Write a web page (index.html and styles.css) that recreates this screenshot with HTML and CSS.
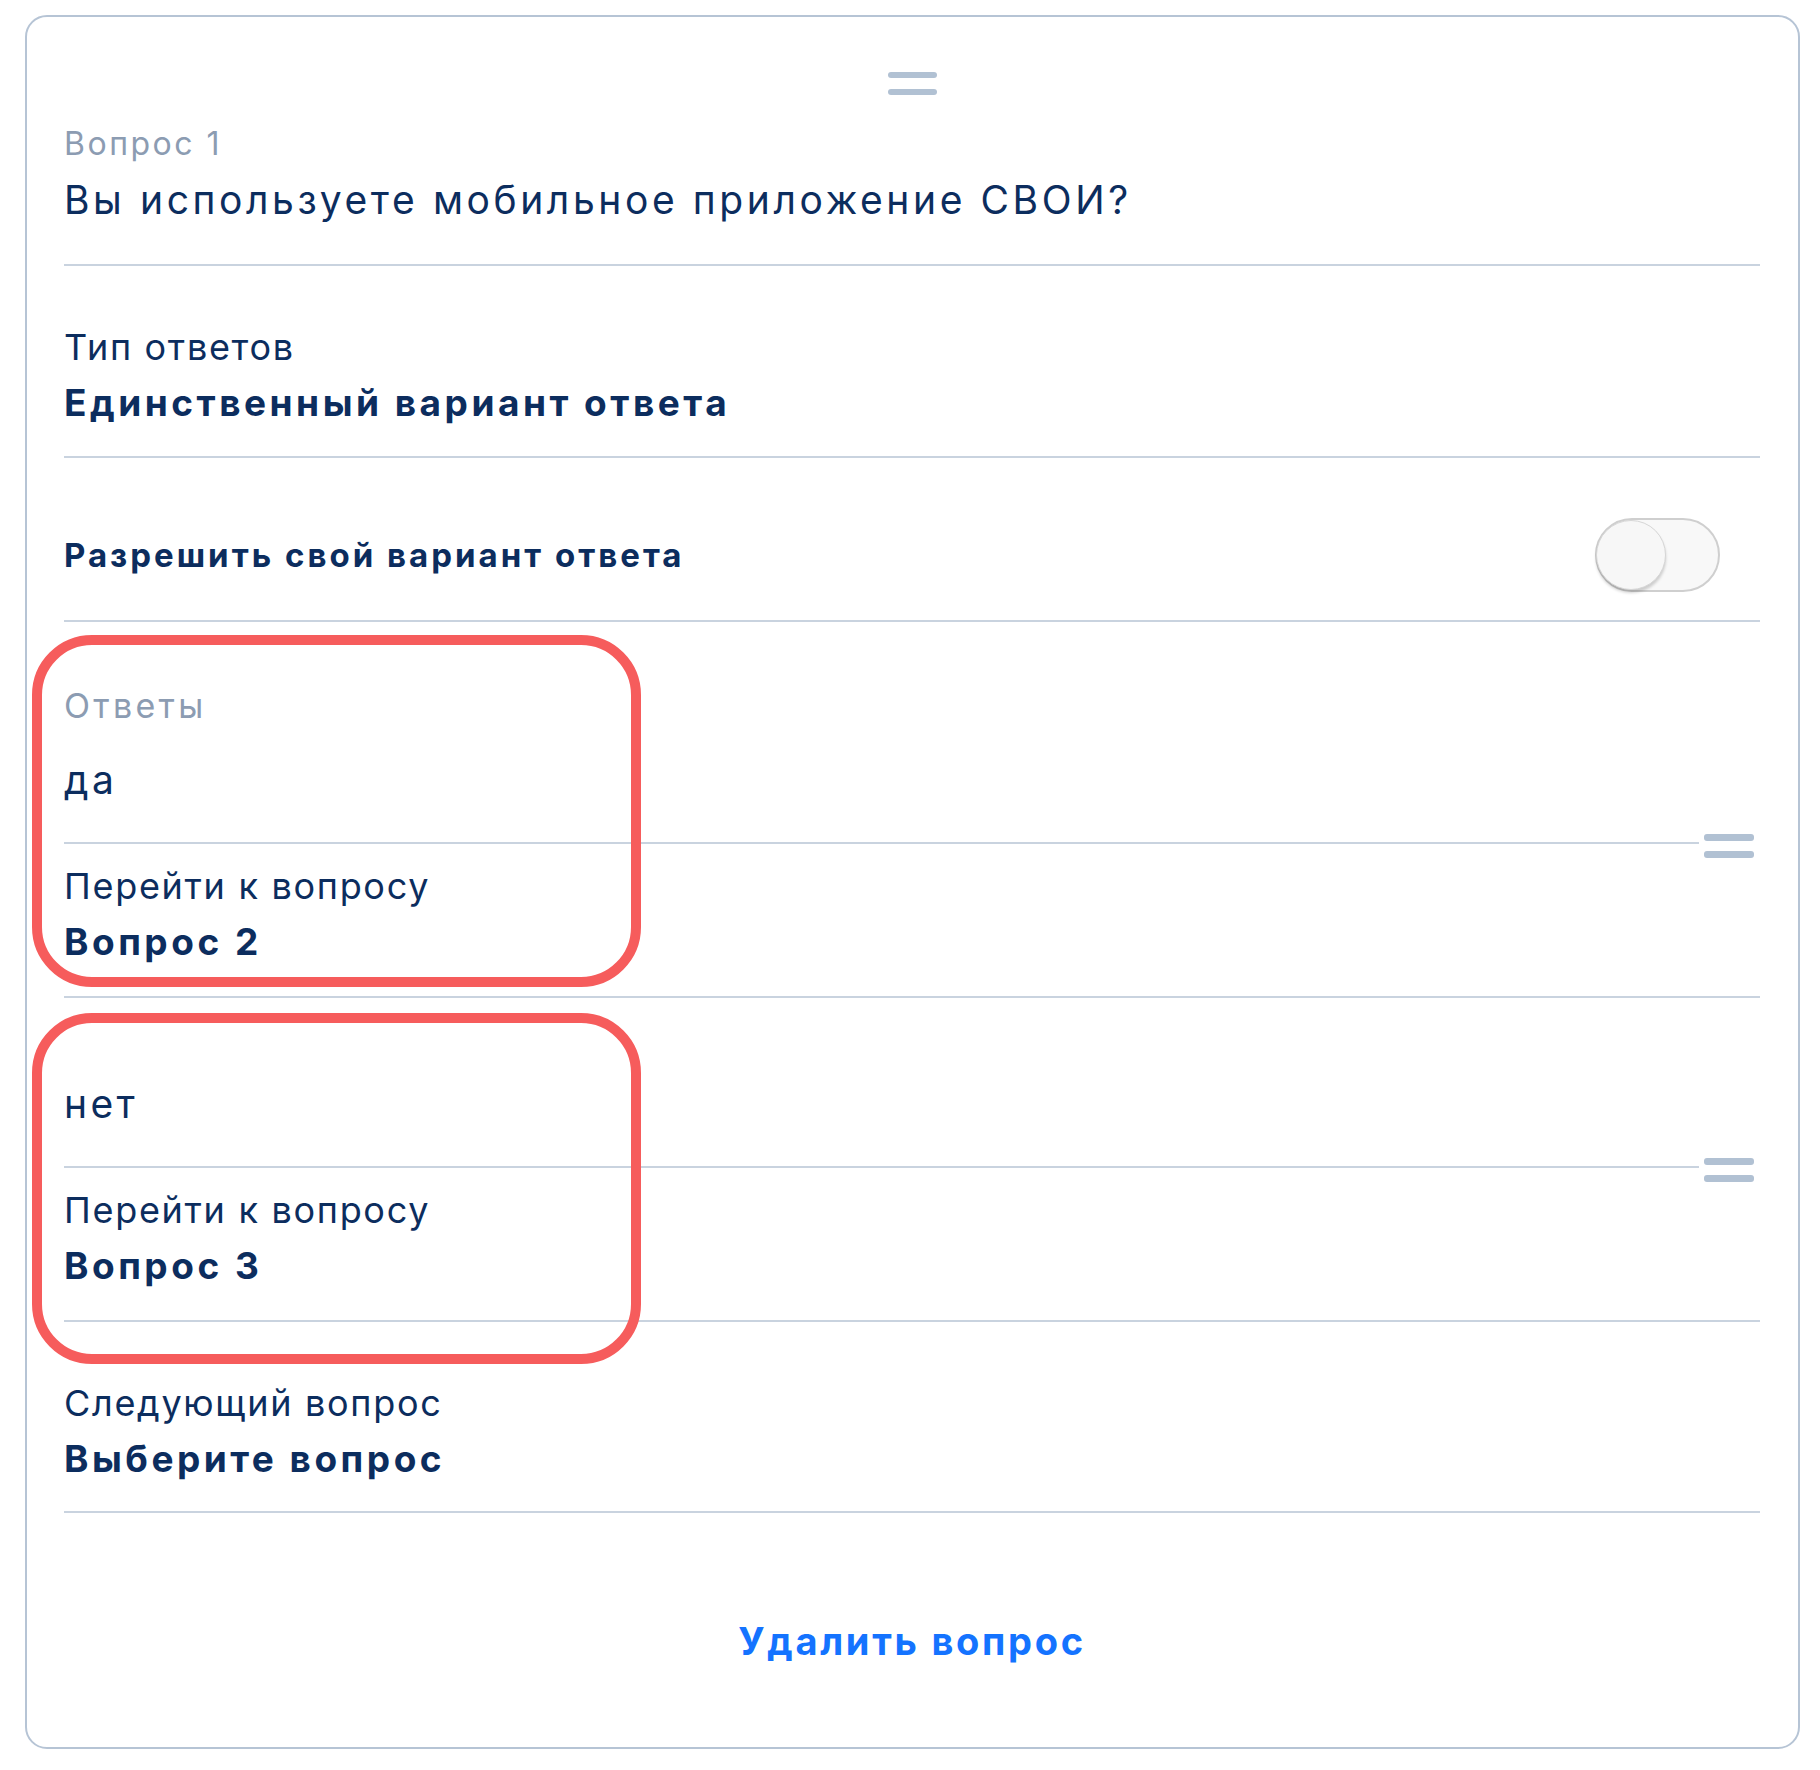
FILE: index.html
```html
<!DOCTYPE html>
<html lang="ru">
<head>
<meta charset="utf-8">
<title>Вопрос 1</title>
<link rel="stylesheet" href="styles.css">
</head>
<body>
<div class="card">
  <div class="grip grip-top"><span></span><span></span></div>

  <div class="question-block">
    <div class="muted">Вопрос 1</div>
    <div class="question">Вы используете мобильное приложение СВОИ?</div>
  </div>

  <div class="field">
    <div class="label">Тип ответов</div>
    <div class="value">Единственный вариант ответа</div>
  </div>

  <div class="toggle-row">
    <div class="toggle-label">Разрешить свой вариант ответа</div>
    <div class="toggle"><span class="knob"></span></div>
  </div>

  <div class="answer answer-first">
    <div class="answer-head">
      <div class="answer-main">
        <div class="muted answers-title">Ответы</div>
        <div class="answer-text">да</div>
      </div>
      <div class="grip grip-row"><span></span><span></span></div>
    </div>
    <div class="answer-goto">
      <div class="label">Перейти к вопросу</div>
      <div class="value">Вопрос 2</div>
    </div>
    <div class="highlight"></div>
  </div>

  <div class="answer">
    <div class="answer-head">
      <div class="answer-main">
        <div class="answer-text">нет</div>
      </div>
      <div class="grip grip-row"><span></span><span></span></div>
    </div>
    <div class="answer-goto">
      <div class="label">Перейти к вопросу</div>
      <div class="value">Вопрос 3</div>
    </div>
    <div class="highlight"></div>
  </div>

  <div class="field field-next">
    <div class="label">Следующий вопрос</div>
    <div class="value">Выберите вопрос</div>
  </div>

  <div class="delete">Удалить вопрос</div>
</div>
</body>
</html>
```

FILE: styles.css
```css
* { box-sizing: border-box; }

html, body {
  margin: 0;
  padding: 0;
  background: #ffffff;
}

body {
  font-family: "Inter", "Noto Sans", sans-serif;
  color: #0c2d5e;
}

.card {
  margin: 15px 0 0 25px;
  width: 1775px;
  height: 1734px;
  border: 2px solid #b6c4d5;
  border-radius: 22px;
  padding: 0 38px 0 37px;
  background: #fff;
}

/* drag grips */
.grip {
  display: flex;
  flex-direction: column;
  width: 50px;
}
.grip span {
  display: block;
  height: 6px;
  border-radius: 3px;
  background: #b1c1d3;
}
.grip-top {
  margin: 55px auto 0;
  gap: 11px;
  width: 49px;
}
.grip-row {
  flex: 0 0 50px;
  margin-left: 5px;
  margin-right: 6px;
  align-self: flex-end;
  margin-bottom: -14px;
  gap: 10px;
}
.grip-row span { height: 7px; }

.muted {
  color: #8c9cb2;
  font-size: 32px;
  line-height: 56px;
  letter-spacing: 2.5px;
}

.question-block {
  padding-top: 21px;
  padding-bottom: 36px;
  border-bottom: 2px solid #c9d3df;
}
.question {
  font-size: 39px;
  line-height: 56px;
  letter-spacing: 3.6px;
}

.field {
  padding: 54px 0 26px;
  border-bottom: 2px solid #c9d3df;
}
.field-next { padding-bottom: 25px; }

.label {
  font-size: 36px;
  line-height: 55px;
  letter-spacing: 1.7px;
}
.value {
  font-size: 37px;
  line-height: 55px;
  font-weight: 700;
  letter-spacing: 3.5px;
}

.toggle-row {
  display: flex;
  align-items: center;
  justify-content: space-between;
  padding: 60px 40px 28px 0;
  border-bottom: 2px solid #c9d3df;
}
.toggle-label {
  font-size: 33px;
  line-height: 55px;
  font-weight: 700;
  letter-spacing: 3px;
}

.toggle {
  position: relative;
  width: 125px;
  height: 74px;
  border-radius: 37px;
  background: #f8f8f8;
  border: 2px solid #cfcfcf;
}
.knob {
  position: absolute;
  left: -1px;
  top: 0px;
  width: 70px;
  height: 70px;
  border-radius: 50%;
  background: #f7f7f7;
  border: 1.5px solid #d6d6d6;
  box-shadow: 0 3px 3px rgba(0,0,0,0.18);
}

.answer {
  position: relative;
  border-bottom: 2px solid #c9d3df;
}
.answer-head {
  display: flex;
}
.answer-main {
  flex: 1;
  border-bottom: 2px solid #c9d3df;
  padding: 78px 0 34px;
}
.answer-first .answer-main {
  padding-top: 59px;
}
.answers-title {
  font-size: 34px;
  line-height: 50px;
  margin-bottom: 21px;
  letter-spacing: 3.3px;
}
.answer-text {
  font-size: 39px;
  line-height: 56px;
  letter-spacing: 3.4px;
}
.answer-goto {
  padding: 15px 0 27px;
}

.highlight {
  position: absolute;
  left: -32px;
  top: 13px;
  width: 609px;
  height: 352px;
  border: 10px solid #f65c5c;
  border-radius: 60px;
  pointer-events: none;
}
.answer:not(.answer-first) .highlight {
  top: 15px;
  height: 351px;
}

.delete {
  margin-top: 100px;
  text-align: center;
  color: #1473ff;
  font-size: 38px;
  line-height: 56px;
  font-weight: 700;
  letter-spacing: 2.7px;
}
```
